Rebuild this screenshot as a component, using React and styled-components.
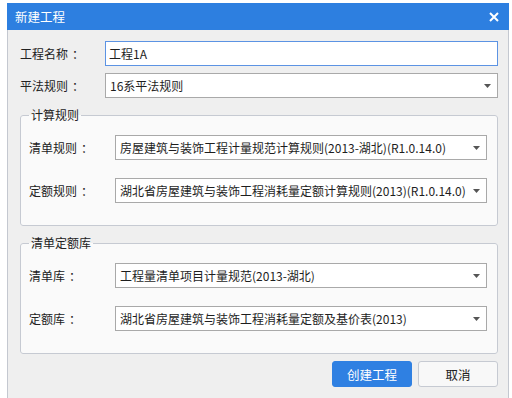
import React from 'react';
import styled, { createGlobalStyle } from 'styled-components';

const GlobalStyle = createGlobalStyle`
  html, body {
    margin: 0;
    padding: 0;
    background: #ffffff;
  }
  body {
    font-family: "Noto Sans CJK SC", "Noto Sans", sans-serif;
    font-size: 12px;
    color: #1e1e1e;
  }
`;

const Arrow = () => (
  <svg width="7" height="4" viewBox="0 0 7 4">
    <path d="M0 0h7L3.5 4z" fill="#555" />
  </svg>
);

const CloseIcon = () => (
  <svg width="10" height="10" viewBox="0 0 10 10">
    <path d="M1 1l8 8M9 1l-8 8" stroke="#fff" strokeWidth="2" />
  </svg>
);

// label text, then a centred colon like the reference
const Field = ({ label, children }) => (
  <Row>
    <Label>
      {label}
      <Colon>：</Colon>
    </Label>
    {children}
  </Row>
);

const Select = ({ value }) => (
  <SelectBox>
    <SelectText>{value}</SelectText>
    <Arrow />
  </SelectBox>
);

const App = () => (
  <>
    <GlobalStyle />
    <Dialog>
      <TitleBar>
        <Title>新建工程</Title>
        <CloseButton type="button">
          <CloseIcon />
        </CloseButton>
      </TitleBar>
      <Body>
        <Field label="工程名称">
          <TextInput defaultValue="工程1A" />
        </Field>
        <Field label="平法规则">
          <Select value="16系平法规则" />
        </Field>

        <Group>
          <Legend>计算规则</Legend>
          <GroupRows>
            <Field label="清单规则">
              <Select value="房屋建筑与装饰工程计量规范计算规则(2013-湖北)(R1.0.14.0)" />
            </Field>
            <Field label="定额规则">
              <Select value="湖北省房屋建筑与装饰工程消耗量定额计算规则(2013)(R1.0.14.0)" />
            </Field>
          </GroupRows>
        </Group>

        <Group>
          <Legend>清单定额库</Legend>
          <GroupRows>
            <Field label="清单库">
              <Select value="工程量清单项目计量规范(2013-湖北)" />
            </Field>
            <Field label="定额库">
              <Select value="湖北省房屋建筑与装饰工程消耗量定额及基价表(2013)" />
            </Field>
          </GroupRows>
        </Group>

        <Footer>
          <Button primary>创建工程</Button>
          <Button>取消</Button>
        </Footer>
      </Body>
    </Dialog>
  </>
);

const Dialog = styled.div`
  margin: 3px 0 0 7px;
  width: 502px;
  height: 395px;
  box-sizing: border-box;
  background: #efefef;
  border-left: 1px solid #c4c8d0;
  border-right: 1px solid #c4c8d0;
`;

const TitleBar = styled.div`
  height: 27px;
  margin: 0 -1px;
  background: #2d7fe0;
  display: flex;
  align-items: center;
  justify-content: space-between;
  padding: 0 10px 0 8px;
`;

const Title = styled.div`
  color: #ffffff;
  font-size: 12.5px;
  line-height: 16px;
`;

const CloseButton = styled.button`
  border: 0;
  background: none;
  padding: 0;
  width: 10px;
  height: 10px;
  display: flex;
  cursor: pointer;
`;

const Body = styled.div`
  padding: 11px 10px 0 12px;
  display: flex;
  flex-direction: column;
`;

const Row = styled.div`
  display: flex;
  align-items: center;
  & + & {
    margin-top: 7px;
  }
`;

const Label = styled.div`
  width: 85px;
  flex-shrink: 0;
  line-height: 16px;
  font-size: 12px;
  color: #222;
  white-space: nowrap;
`;

const Colon = styled.span`
  margin-left: 4px;
`;

const TextInput = styled.input`
  flex: 1;
  min-width: 0;
  height: 25px;
  box-sizing: border-box;
  border: 1px solid #5c93e3;
  background: #fff;
  padding: 0 3px;
  font: inherit;
  font-size: 12px;
  color: #1e1e1e;
  outline: none;
`;

const SelectBox = styled.div`
  flex: 1;
  min-width: 0;
  height: 25px;
  box-sizing: border-box;
  border: 1px solid #a9a9a9;
  background: #fff;
  display: flex;
  align-items: center;
  justify-content: space-between;
  padding: 0 6px 0 4px;
`;

const SelectText = styled.span`
  white-space: nowrap;
  overflow: hidden;
  line-height: 16px;
`;

const Group = styled.fieldset`
  margin: 9px 0 0;
  padding: 12px 10px 22px 8px;
  border: 1px solid #c6cad2;
  border-radius: 3px;
  background: #fafafa;
  min-width: 0;
`;

const Legend = styled.legend`
  padding: 0 2px;
  line-height: 16px;
  font-size: 12px;
  color: #222;
`;

const GroupRows = styled.div`
  display: flex;
  flex-direction: column;
  gap: 18px;
  ${Row} + ${Row} {
    margin-top: 0;
  }
  ${Label} {
    width: 86px;
  }
`;

const Footer = styled.div`
  display: flex;
  justify-content: flex-end;
  gap: 6px;
  margin-top: 7px;
`;

const Button = styled.button`
  width: 80px;
  height: 26px;
  box-sizing: border-box;
  border-radius: 3px;
  font: inherit;
  font-size: 12.5px;
  cursor: pointer;
  border: 1px solid ${(p) => (p.primary ? '#2f80e2' : '#c6cad2')};
  background: ${(p) => (p.primary ? '#2f80e2' : '#f8f8f8')};
  color: ${(p) => (p.primary ? '#ffffff' : '#222')};
`;

export default App;
